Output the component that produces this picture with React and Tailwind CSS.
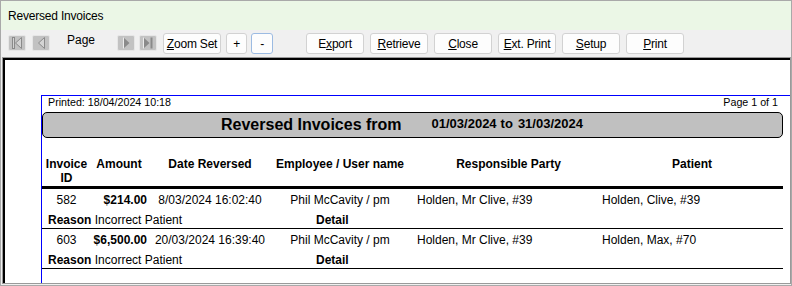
import clsx from "clsx";

const rows = [
  {
    id: "582",
    amount: "$214.00",
    date: "8/03/2024 16:02:40",
    employee: "Phil McCavity / pm",
    party: "Holden, Mr Clive, #39",
    patient: "Holden, Clive, #39",
    reason: "Incorrect Patient",
  },
  {
    id: "603",
    amount: "$6,500.00",
    date: "20/03/2024 16:39:40",
    employee: "Phil McCavity / pm",
    party: "Holden, Mr Clive, #39",
    patient: "Holden, Max, #70",
    reason: "Incorrect Patient",
  },
];

const cols = "grid grid-cols-[49px_59px_120px_140px_190px_182px]";

function NavButton({ kind, enabled, className }) {
  const fill = enabled ? "#8a8a8a" : "#d4d4d4";
  const edge = enabled ? "#ececec" : "#8a8a8a";
  return (
    <div
      className={clsx(
        "mt-[2px] flex h-[16px] w-[18px] items-center justify-center rounded-[2px] border border-[#e6e6e6] bg-[#c2c2c2]",
        className
      )}
    >
      <svg width="16" height="14" viewBox="0 0 16 14">
        {kind === "first" && (
          <>
            <rect x="3.5" y="1.5" width="2" height="11" fill={fill} stroke={edge} strokeWidth="1" />
            <polygon points="12.5,1.5 6.5,7 12.5,12.5" fill={fill} stroke={edge} strokeWidth="1" />
          </>
        )}
        {kind === "prev" && (
          <polygon points="11.5,1.5 5.5,7 11.5,12.5" fill={fill} stroke={edge} strokeWidth="1" />
        )}
        {kind === "next" && (
          <>
            <polygon points="5.5,1.5 11.5,7 5.5,12.5" fill={fill} />
            <line x1="5.5" y1="1.5" x2="5.5" y2="12.5" stroke={edge} strokeWidth="1" />
          </>
        )}
        {kind === "last" && (
          <>
            <polygon points="3.5,1.5 9.5,7 3.5,12.5" fill={fill} />
            <line x1="3.5" y1="1.5" x2="3.5" y2="12.5" stroke={edge} strokeWidth="1" />
            <rect x="10.5" y="1.5" width="2" height="11" fill={fill} />
          </>
        )}
      </svg>
    </div>
  );
}

function Button({ children, className, width = "w-[58px]" }) {
  return (
    <button
      className={clsx(
        "flex h-[21px] items-center justify-center rounded-[3px] border bg-[#fdfdfd] text-[12px] leading-none tracking-[-0.2px] text-black",
        width,
        className
      )}
    >
      {children}
    </button>
  );
}

function Row({ row }) {
  return (
    <div>
      <div className="pt-[4px] pb-[1px]">
        <div className={clsx(cols, "text-[12px] leading-[14px]")}>
          <div className="text-center">{row.id}</div>
          <div className="pr-[3px] text-right font-bold">{row.amount}</div>
          <div className="text-center">{row.date}</div>
          <div className="text-center">{row.employee}</div>
          <div className="pl-[7px]">{row.party}</div>
          <div className="pl-[2px]">{row.patient}</div>
        </div>
        <div className="mt-[6px] flex text-[12px] leading-[14px]">
          <div className="w-[274px] pl-[6px]">
            <span className="font-bold">Reason</span> {row.reason}
          </div>
          <div className="font-bold">Detail</div>
        </div>
      </div>
      <div className="h-[1px] w-[741px] bg-black" />
    </div>
  );
}

export default function App() {
  return (
    <div className="flex h-[286px] w-[792px] flex-col overflow-hidden border border-[#a9a9a9] bg-[#f0f0f0] font-['Liberation_Sans',Arial,sans-serif] text-black">
      <div className="flex h-[29px] shrink-0 items-center bg-[#ebf7e6] pl-[7px] text-[12px] tracking-[-0.2px]">
        Reversed Invoices
      </div>

      <div className="flex h-[27px] shrink-0 items-start pl-[7px] pt-[3px]">
        <NavButton kind="first" />
        <NavButton kind="prev" className="ml-[6px]" />
        <span className="ml-[17px] text-[12px] leading-[14px]">Page</span>
        <NavButton kind="next" enabled className="ml-[22px]" />
        <NavButton kind="last" enabled className="ml-[4px]" />
        <Button className="ml-[6px] border-[#d2d2d2]">
          <span className="underline">Z</span>oom Set
        </Button>
        <Button width="w-[21px]" className="ml-[5px] border-[#d2d2d2]">
          +
        </Button>
        <Button width="w-[22px]" className="ml-[4px] border-[#9cbbe2]">
          -
        </Button>
        <Button className="ml-[33px] border-[#d2d2d2]">
          E<span className="underline">x</span>port
        </Button>
        <Button className="ml-[6px] border-[#d2d2d2]">
          <span className="underline">R</span>etrieve
        </Button>
        <Button className="ml-[6px] border-[#d2d2d2]">
          <span className="underline">C</span>lose
        </Button>
        <Button className="ml-[6px] border-[#d2d2d2]">
          <span className="underline">E</span>xt. Print
        </Button>
        <Button className="ml-[6px] border-[#d2d2d2]">
          <span className="underline">S</span>etup
        </Button>
        <Button className="ml-[6px] border-[#d2d2d2]">
          <span className="underline">P</span>rint
        </Button>
      </div>

      <div className="flex min-h-0 flex-1 pl-[1px] pb-[1px]">
        <div className="flex min-w-0 flex-1 border border-[#9a9a9a]">
          <div className="flex min-w-0 flex-1 border-l-2 border-t-2 border-black bg-white">
            <div className="ml-[36px] mt-[35px] min-w-0 flex-1 overflow-hidden border-l border-t border-[#0000ff]">
              <div className="flex w-[736px] justify-between pl-[6px] text-[10.7px] leading-[12px]">
                <span>Printed: 18/04/2024 10:18</span>
                <span>Page 1 of 1</span>
              </div>

              <div className="mt-[4px] flex h-[26px] w-[741px] items-center rounded-[5px] border border-black bg-[#c0c0c0] pl-[178px] font-bold">
                <span className="text-[16px] leading-[18px]">Reversed Invoices from</span>
                <span className="mb-[3px] ml-[30px] text-[13px] leading-[15px]">01/03/2024</span>
                <span className="mb-[3px] ml-[4px] text-[13px] leading-[15px]">to</span>
                <span className="mb-[3px] ml-[5px] text-[13px] leading-[15px]">31/03/2024</span>
              </div>

              <div className={clsx(cols, "mt-[19px] text-[12px] font-bold leading-[14px]")}>
                <div className="text-center">
                  Invoice
                  <br />
                  ID
                </div>
                <div className="pr-[3px] text-center">Amount</div>
                <div className="text-center">Date Reversed</div>
                <div className="text-center">Employee / User name</div>
                <div className="pl-[7px] text-center">Responsible Party</div>
                <div className="pl-[2px] text-center">Patient</div>
              </div>
              <div className="mt-[1px] h-[3px] w-[741px] bg-black" />

              {rows.map((row) => (
                <Row key={row.id} row={row} />
              ))}
            </div>
          </div>
        </div>
      </div>
    </div>
  );
}
